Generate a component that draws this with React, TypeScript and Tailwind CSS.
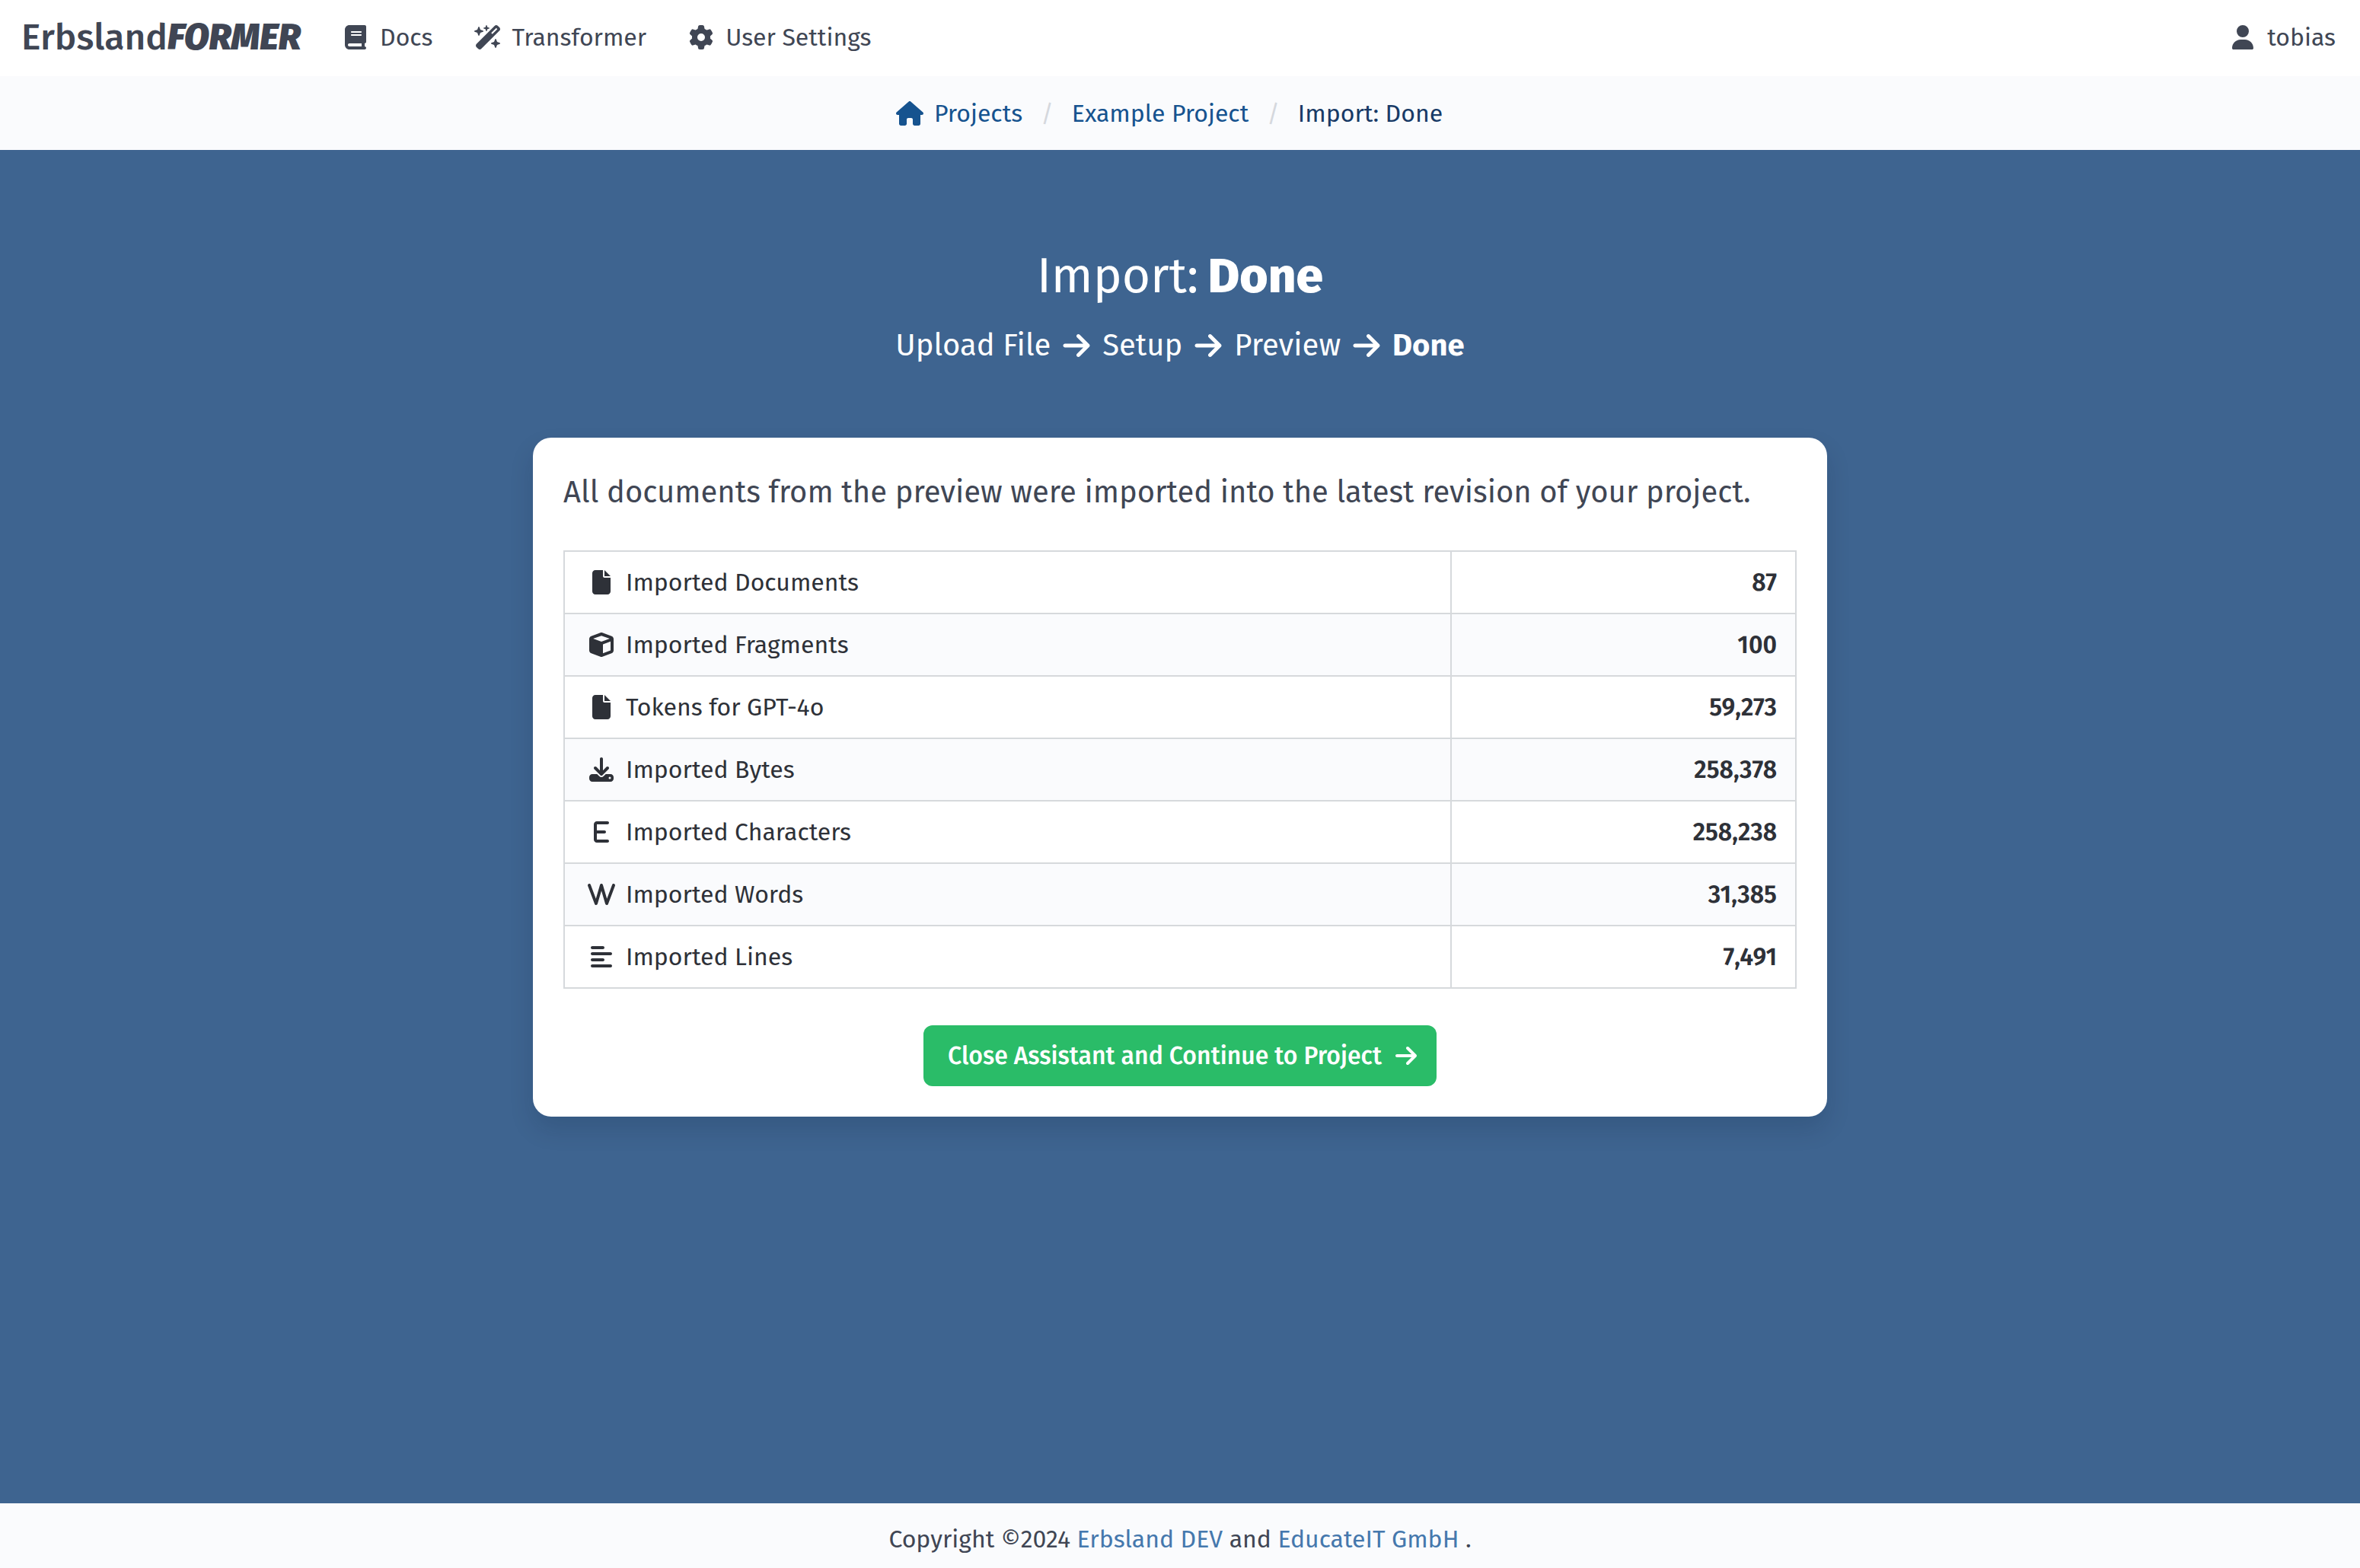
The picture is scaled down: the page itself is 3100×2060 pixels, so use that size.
import type { ReactNode } from "react";
import type { IconType } from "react-icons";
import {
  FaAlignLeft,
  FaArrowRight,
  FaBook,
  FaCube,
  FaDownload,
  FaE,
  FaFile,
  FaGear,
  FaHouse,
  FaUser,
  FaW,
  FaWandMagicSparkles,
} from "react-icons/fa6";

const navItems: { icon: IconType; label: string }[] = [
  { icon: FaBook, label: "Docs" },
  { icon: FaWandMagicSparkles, label: "Transformer" },
  { icon: FaGear, label: "User Settings" },
];

const results: { icon: IconType; label: string; value: string }[] = [
  { icon: FaFile, label: "Imported Documents", value: "87" },
  { icon: FaCube, label: "Imported Fragments", value: "100" },
  { icon: FaFile, label: "Tokens for GPT-4o", value: "59,273" },
  { icon: FaDownload, label: "Imported Bytes", value: "258,378" },
  { icon: FaE, label: "Imported Characters", value: "258,238" },
  { icon: FaW, label: "Imported Words", value: "31,385" },
  { icon: FaAlignLeft, label: "Imported Lines", value: "7,491" },
];

const steps = ["Upload File", "Setup", "Preview"];

function IconBox({ icon: Icon }: { icon: IconType }) {
  return (
    <span className="flex size-12 shrink-0 items-center justify-center">
      <Icon className="h-8 w-9" aria-hidden="true" />
    </span>
  );
}

function NavLink({ icon, label }: { icon: IconType; label: string }) {
  return (
    <a href="#" className="flex items-center gap-2 px-6">
      <IconBox icon={icon} />
      <span>{label}</span>
    </a>
  );
}

function Navbar() {
  return (
    <nav aria-label="Main" className="flex h-[100px] items-center justify-between bg-white pb-0.5 text-[#404654]">
      <div className="flex items-center">
        <a href="#" className="pr-6 pl-7 text-5xl font-medium">
          Erbsland<em className="font-black">FORMER</em>
        </a>
        {navItems.map((item) => (
          <NavLink key={item.label} {...item} />
        ))}
      </div>
      <div className="pr-2">
        <NavLink icon={FaUser} label="tobias" />
      </div>
    </nav>
  );
}

function Crumb({ children }: { children: ReactNode }) {
  return (
    <li className="flex items-center before:text-[#d5d8dd] before:content-['/'] first:before:content-none">
      {children}
    </li>
  );
}

function Breadcrumbs() {
  return (
    <nav aria-label="Breadcrumb" className="flex h-[97px] items-center justify-center bg-[#fafbfd]">
      <ol className="flex items-center pr-2.5 text-[#16538f]">
        <Crumb>
          <a href="#" className="flex items-center gap-2 pr-6">
            <IconBox icon={FaHouse} />
            Projects
          </a>
        </Crumb>
        <Crumb>
          <a href="#" className="px-6">
            Example Project
          </a>
        </Crumb>
        <Crumb>
          <a href="#" aria-current="page" className="px-6 text-[#183a66]">
            Import: Done
          </a>
        </Crumb>
      </ol>
    </nav>
  );
}

function Steps() {
  return (
    <ol className="mt-[21px] flex items-center justify-center text-[40px] leading-[60px]">
      {steps.map((step) => (
        <li key={step} className="flex items-center">
          {step}
          <FaArrowRight className="mx-3.5 size-10" aria-label="then" />
        </li>
      ))}
      <li aria-current="step" className="font-bold">
        Done
      </li>
    </ol>
  );
}

function ResultTable() {
  return (
    <table className="w-full border-collapse text-[#2e3138]">
      <tbody>
        {results.map(({ icon, label, value }) => (
          <tr key={label} className="h-[82px] even:bg-[#fafbfd]">
            <th scope="row" className="w-[72%] border-2 border-[#d6d9dc] px-6 text-left font-normal">
              <span className="flex items-center gap-2">
                <IconBox icon={icon} />
                {label}
              </span>
            </th>
            <td className="border-2 border-[#d6d9dc] px-6 text-right font-semibold">{value}</td>
          </tr>
        ))}
      </tbody>
    </table>
  );
}

export default function App() {
  return (
    <div className="flex min-h-screen flex-col bg-[#3e6490] font-['Fira_Sans','Noto_Sans',sans-serif] text-[32px] leading-[48px]">
      <Navbar />
      <Breadcrumbs />
      <main className="flex-1 px-12 pt-[126px]">
        <header className="text-center text-white">
          <h1 className="flex justify-center gap-3 text-[64px] leading-[80px]">
            <span>Import:</span>
            <strong className="font-extrabold">Done</strong>
          </h1>
          <Steps />
        </header>
        <section className="mx-auto mt-[91px] max-w-[1700px] rounded-3xl bg-white p-10 shadow-[0_16px_32px_rgba(10,20,40,0.14)]">
          <p className="text-[40px] leading-[64px] text-[#404654]">
            All documents from the preview were imported into the latest revision of your project.
          </p>
          <div className="mt-11">
            <ResultTable />
          </div>
          <div className="mt-12 flex justify-center">
            <button
              type="button"
              className="flex h-20 items-center gap-2 rounded-xl bg-[#2abc68] pr-4 pl-8 font-medium text-white"
            >
              Close Assistant and Continue to Project
              <IconBox icon={FaArrowRight} />
            </button>
          </div>
        </section>
      </main>
      <footer className="flex h-[85px] items-center justify-center bg-[#fafbfd] pt-2 text-[#404654]">
        <p>
          Copyright ©2024{" "}
          <a href="#" className="text-[#4578ad]">
            Erbsland DEV
          </a>{" "}
          and{" "}
          <a href="#" className="text-[#4578ad]">
            EducateIT GmbH
          </a>{" "}
          .
        </p>
      </footer>
    </div>
  );
}
